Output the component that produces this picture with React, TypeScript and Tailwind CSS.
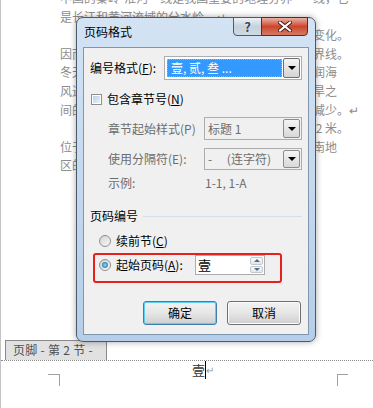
import React from "react";

type DocLine = {
  left: string;
  right: string;
};

const docLines: DocLine[] = [
  { left: "中国的秦岭-淮河一线是我国重要的地理分界", right: "线，它" },
  { left: "是长江和黄河流域的分水岭。↵", right: "" },
  { left: "　　秦岭-淮河一线南北两侧的自然景观", right: "变化。" },
  { left: "因而秦岭-淮河一线成为我国亚热带与暖温", right: "界线。" },
  { left: "冬天，秦岭阻挡了北方寒冷空气的南下；夏", right: "润海" },
  { left: "风进入西北地区，使得秦岭南北气候差异明显", right: "旱之" },
  { left: "间的过渡地带，向北降水逐渐", right: "减少。↵" },
  { left: "　　秦岭主峰太白山海拔约三千七百米，平", right: " 2 米。" },
  { left: "位于陕西省南部的秦岭，是我国地理上最重", right: "南地" },
  { left: "区的气候温暖湿润。", right: "" }
];

function DropButton({ disabled }: { disabled?: boolean }) {
  return (
    <span
      className={
        disabled
          ? "flex h-full w-[17px] items-center justify-center rounded-[2px] border border-[#8c8c8c] bg-linear-to-b from-[#f4f4f4] to-[#d8d8d8]"
          : "flex h-full w-[17px] items-center justify-center rounded-[2px] border border-[#707070] bg-linear-to-b from-[#f4f4f4] to-[#d4d4d4]"
      }
    >
      <span className="h-0 w-0 border-x-[4px] border-t-[4px] border-x-transparent border-t-black" />
    </span>
  );
}

function Radio({ checked }: { checked?: boolean }) {
  return (
    <span className="flex h-[12px] w-[12px] shrink-0 items-center justify-center rounded-full border border-[#8e8f8f] bg-linear-to-br from-[#d2d2d2] to-[#fafafa]">
      {checked && <span className="h-[6px] w-[6px] rounded-full bg-radial from-[#8fd8fa] to-[#145c9e]" />}
    </span>
  );
}

function WinButton({ label, focused }: { label: string; focused?: boolean }) {
  return (
    <div
      className={
        focused
          ? "flex h-[24px] w-[74px] items-center justify-center rounded-[3px] border border-[#3c7fb1] bg-linear-to-b from-[#f2f2f2] via-[#e6e6e6] to-[#cfcfcf] text-black shadow-[inset_0_0_0_1px_#5fd0f5]"
          : "flex h-[24px] w-[74px] items-center justify-center rounded-[3px] border border-[#707070] bg-linear-to-b from-[#f2f2f2] via-[#e6e6e6] to-[#cfcfcf] text-black shadow-[inset_0_0_0_1px_#fcfcfc]"
      }
    >
      {label}
    </div>
  );
}

function PageNumberDialog() {
  return (
    <div className="absolute left-[75px] top-[17px] flex h-[325px] w-[240px] flex-col rounded-[7px] border border-[#4b5a69] bg-linear-to-b from-[#d3e3f4] to-[#b6cee9] px-[6px] pb-[6px] shadow-[0_0_6px_rgba(0,0,0,0.35)]">
      <div className="flex h-[29px] items-start justify-between">
        <span className="pl-[1px] pt-[7px] text-[12px] leading-[14px] text-black">页码格式</span>
        <div className="-mt-px mr-px flex">
          <div className="flex h-[19px] w-[29px] items-center justify-center rounded-bl-[4px] border border-[#4d5a67] bg-linear-to-b from-[#eef2f6] via-[#c5d1dc] to-[#cfd9e3] text-[13px] font-bold leading-none text-[#3a4652] [text-shadow:0_0_2px_#fff]">
            ?
          </div>
          <div className="-ml-px flex h-[19px] w-[47px] items-center justify-center rounded-br-[4px] border border-[#5a2a22] bg-linear-to-b from-[#eab0a3] via-[#c9462c] to-[#d67a64]">
            <svg width="14" height="11" viewBox="0 0 14 11">
              <path d="M2 1.5 L12 9.5 M12 1.5 L2 9.5" stroke="#4a1f18" strokeWidth="4" strokeLinecap="square" />
              <path d="M2 1.5 L12 9.5 M12 1.5 L2 9.5" stroke="#ffffff" strokeWidth="2" strokeLinecap="square" />
            </svg>
          </div>
        </div>
      </div>

      <div className="flex flex-1 flex-col border border-[#8296ab] bg-[#f0f0f0] text-[12px] leading-[14px] text-black">
        <div className="mt-[8px] flex h-[24px] items-center justify-between px-[6px]">
          <span>
            编号格式(<span className="underline">F</span>):
          </span>
          <div className="flex h-[24px] w-[138px] items-stretch border border-[#abadb3] bg-white p-px">
            <div className="m-px flex flex-1 items-center border border-dotted border-[#f0a040] bg-[#3399ff] pl-[3px] text-white">
              壹, 贰, 叁 ...
            </div>
            <DropButton />
          </div>
        </div>

        <div className="mt-[13px] flex h-[12px] items-center gap-[5px] pl-[7px]">
          <span className="flex h-[11px] w-[11px] items-center justify-center border border-[#8e8f8f] bg-white">
            <span className="h-[7px] w-[7px] bg-linear-to-br from-[#b9cfe6] to-[#e9f1fa]" />
          </span>
          <span>
            包含章节号(<span className="underline">N</span>)
          </span>
        </div>

        <div className="mt-[12px] flex h-[23px] items-center justify-between pl-[24px] pr-[6px] text-[#6d6d6d]">
          <span>章节起始样式(P)</span>
          <div className="flex h-[23px] w-[98px] items-stretch border border-[#adadad] p-px">
            <span className="flex flex-1 items-center pl-[2px]">标题 1</span>
            <DropButton disabled />
          </div>
        </div>

        <div className="mt-[8px] flex h-[22px] items-center justify-between pl-[24px] pr-[6px] text-[#6d6d6d]">
          <span>使用分隔符(E):</span>
          <div className="flex h-[22px] w-[98px] items-stretch border border-[#adadad] p-px">
            <span className="flex flex-1 items-center pl-[2px]">-　 (连字符)</span>
            <DropButton disabled />
          </div>
        </div>

        <div className="mt-[5px] flex h-[16px] items-center pl-[24px] text-[#6d6d6d]">
          <span className="w-[97px]">示例:</span>
          <span>1-1, 1-A</span>
        </div>

        <div className="mt-[17px] flex h-[16px] items-center px-[6px]">
          <span>页码编号</span>
          <span className="ml-[5px] h-px flex-1 bg-[#d5dfe5]" />
        </div>

        <div className="mt-[9px] flex h-[16px] items-center gap-[5px] pl-[15px]">
          <Radio />
          <span>
            续前节(<span className="underline">C</span>)
          </span>
        </div>

        <div className="ml-[9px] mt-[4px] h-[30px] w-[189px] rounded-[3px] border-2 border-[#e8201c] pl-[4px]">
          <div className="flex h-[20px] items-center">
            <Radio checked />
            <span className="ml-[5px] w-[79px]">
              起始页码(<span className="underline">A</span>):
            </span>
            <div className="flex h-[20px] w-[70px] items-stretch border border-[#abadb3] bg-white">
              <span className="flex flex-1 items-center pl-[2px] text-[13px]">壹</span>
              <div className="flex w-[15px] flex-col gap-px p-px">
                <span className="flex flex-1 items-center justify-center rounded-[2px] border border-[#c2c7cc] bg-linear-to-b from-[#fafafa] to-[#e2e6ea]">
                  <span className="h-0 w-0 border-x-[3px] border-b-[3px] border-x-transparent border-b-[#4d6b8a]" />
                </span>
                <span className="flex flex-1 items-center justify-center rounded-[2px] border border-[#c2c7cc] bg-linear-to-b from-[#fafafa] to-[#e2e6ea]">
                  <span className="h-0 w-0 border-x-[3px] border-t-[3px] border-x-transparent border-t-[#4d6b8a]" />
                </span>
              </div>
            </div>
          </div>
        </div>

        <div className="mt-[18px] flex justify-end gap-[10px] pr-[7px]">
          <WinButton label="确定" focused />
          <WinButton label="取消" />
        </div>
      </div>
    </div>
  );
}

export default function App() {
  return (
    <div className="relative flex h-[408px] w-[373px] flex-col overflow-hidden border-l border-[#c4c4c4] bg-white font-['Noto_Sans_CJK_SC','Noto_Sans',sans-serif]">
      <div className="-mt-[11px] pl-[59px] text-[12px] leading-[18.6px] text-[#8c8c8c]">
        {docLines.map((line, index) => (
          <div key={index} className="flex h-[18.6px] items-center">
            <span className="w-[253px] whitespace-nowrap">{line.left}</span>
            <span className="whitespace-pre">{line.right}</span>
          </div>
        ))}
      </div>

      <div className="ml-[4px] mt-[165px] flex h-[20px] w-[102px] items-center border-x border-t border-[#8a8a8a] bg-[#e1e1e1] pl-[7px] text-[12px] leading-none tracking-[0.3px] text-[#505050]">
        页脚 - 第 2 节 -
      </div>
      <div className="border-t border-dotted border-[#8a8a8a]" />

      <div className="flex items-start">
        <span className="ml-[47px] mt-[13px] h-[12px] w-[12px] border-r border-t border-[#a0a0a0]" />
        <div className="ml-[132px] flex h-[18px] items-center">
          <span className="text-[13px] leading-[18px] text-[#333]">壹</span>
          <span className="h-[18px] w-px bg-black" />
          <span className="text-[10px] leading-none text-[#9a9a9a]">↵</span>
        </div>
        <span className="ml-auto mr-[25px] mt-[13px] h-[12px] w-[11px] border-l border-t border-[#a0a0a0]" />
      </div>

      <PageNumberDialog />
    </div>
  );
}
